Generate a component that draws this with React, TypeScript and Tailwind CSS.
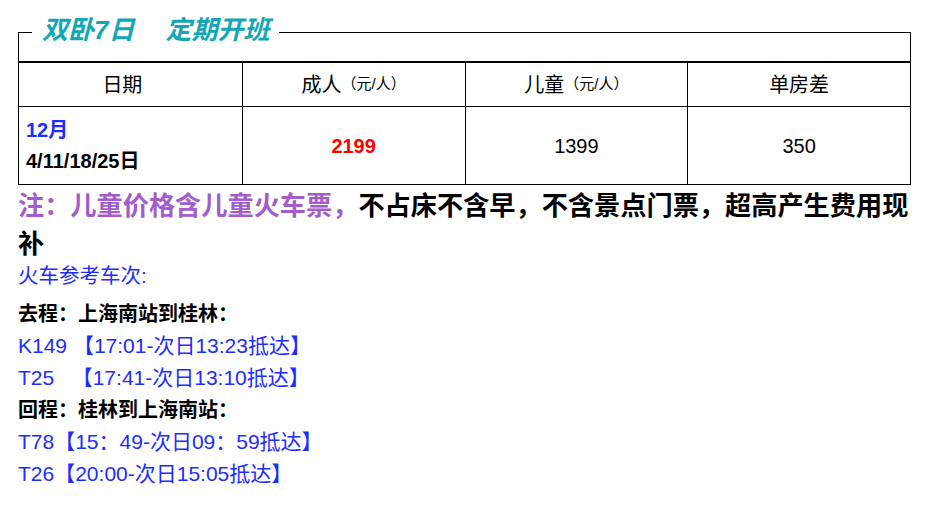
const font = "font-['Liberation_Sans','Noto_Sans_CJK_SC',sans-serif]"

const headers = [
  { label: '日期', extra: 'pr-[16px]' },
  { label: '成人', unit: '（元/人）' },
  { label: '儿童', unit: '（元/人）' },
  { label: '单房差' },
]

const trains = {
  go: [
    'K149 【17:01-次日13:23抵达】',
    'T25\u00a0\u00a0 【17:41-次日13:10抵达】',
  ],
  back: ['T78【15：49-次日09：59抵达】', 'T26【20:00-次日15:05抵达】'],
}

export default function App() {
  return (
    <div className={`${font} min-h-[517px] bg-white text-black`}>
      {/* Schedule box */}
      <fieldset className="ml-[18px] mt-[13px] w-[893px] border-x border-t border-black">
        <legend className="ml-[13px] px-[10px] pb-[4px] text-[26px] font-bold italic leading-[34px] text-[#13a6b4]">
          <span>双卧7日</span>
          <span className="ml-[31px]">定期开班</span>
        </legend>
        <div className="h-[10px]" />

        <div className="grid grid-cols-4 border-t-2 border-b border-black">
          {headers.map((h, i) => (
            <div
              key={h.label}
              className={`flex h-[44px] items-center justify-center border-b border-black text-[20px] ${i > 0 ? 'border-l' : ''} ${h.extra ?? ''}`}
            >
              {h.label}
              {h.unit && <span className="text-[15px]">{h.unit}</span>}
            </div>
          ))}

          <div className="flex h-[77px] flex-col justify-center pl-[7px] text-[20px] font-bold leading-[31px]">
            <span className="text-[#1c2dff]">12月</span>
            <span>4/11/18/25日</span>
          </div>
          <div className="flex items-center justify-center border-l border-black text-[20px] font-bold text-[#f00]">
            2199
          </div>
          <div className="flex items-center justify-center border-l border-black text-[20px]">
            1399
          </div>
          <div className="flex items-center justify-center border-l border-black text-[20px]">
            350
          </div>
        </div>
      </fieldset>

      {/* Notes */}
      <div className="ml-[18px] w-[893px]">
        <p className="mb-[-3px] pt-[2px] text-[26.2px] font-bold leading-[38px]">
          <span className="text-[#a35ccc]">注：儿童价格含儿童火车票，</span>
          不占床不含早，不含景点门票，超高产生费用现补
        </p>
        <div className="text-[20px] leading-[32px]">
          <p className="text-[20.5px] text-[#1c2dff]">火车参考车次:</p>
          <p className="mt-[6px] font-bold">去程：上海南站到桂林：</p>
          {trains.go.map((t) => (
            <p key={t} className="text-[21px] text-[#1c2dff]">{t}</p>
          ))}
          <p className="font-bold">回程：桂林到上海南站：</p>
          {trains.back.map((t) => (
            <p key={t} className="text-[21px] text-[#1c2dff]">{t}</p>
          ))}
        </div>
      </div>
    </div>
  )
}
